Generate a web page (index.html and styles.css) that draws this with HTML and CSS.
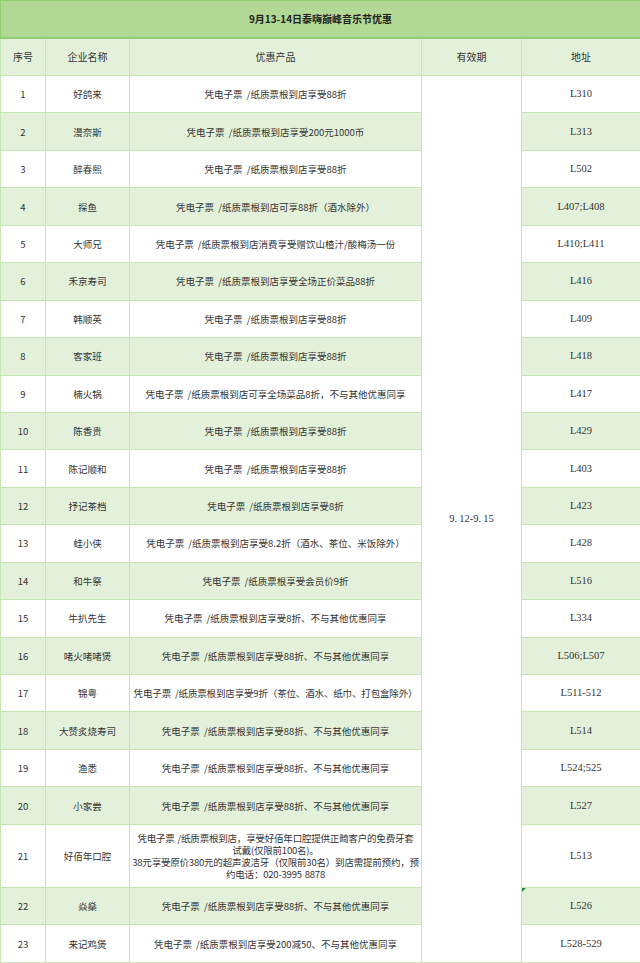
FILE: index.html
```html
<!DOCTYPE html>
<html lang="zh-CN">
<head>
<meta charset="utf-8">
<title>9月13-14日泰嗨巅峰音乐节优惠</title>
<link rel="stylesheet" href="styles.css">
</head>
<body>
<table class="deals">
  <colgroup>
    <col class="c-no">
    <col class="c-name">
    <col class="c-offer">
    <col class="c-valid">
    <col class="c-addr">
  </colgroup>
  <thead>
    <tr class="title-row"><th colspan="5" class="title">9月13-14日泰嗨巅峰音乐节优惠</th></tr>
    <tr class="head-row">
      <th>序号</th><th>企业名称</th><th>优惠产品</th><th>有效期</th><th>地址</th>
    </tr>
  </thead>
  <tbody>
    <tr class="row"><td>1</td><td>好鸽来</td><td class="offer">凭电子票 /纸质票根到店享受88折</td><td rowspan="23" class="valid">9.&#8201;12-9.&#8201;15</td><td class="addr">L310</td></tr>
    <tr class="row alt"><td>2</td><td>漫奈斯</td><td class="offer">凭电子票 /纸质票根到店享受200元1000币</td><td class="addr">L313</td></tr>
    <tr class="row"><td>3</td><td>醉春熙</td><td class="offer">凭电子票 /纸质票根到店享受88折</td><td class="addr">L502</td></tr>
    <tr class="row alt"><td>4</td><td>探鱼</td><td class="offer">凭电子票 /纸质票根到店可享88折（酒水除外）</td><td class="addr">L407;L408</td></tr>
    <tr class="row"><td>5</td><td>大师兄</td><td class="offer">凭电子票 /纸质票根到店消费享受赠饮山楂汁/酸梅汤一份</td><td class="addr">L410;L411</td></tr>
    <tr class="row alt"><td>6</td><td>禾京寿司</td><td class="offer">凭电子票 /纸质票根到店享受全场正价菜品88折</td><td class="addr">L416</td></tr>
    <tr class="row"><td>7</td><td>韩顺英</td><td class="offer">凭电子票 /纸质票根到店享受88折</td><td class="addr">L409</td></tr>
    <tr class="row alt"><td>8</td><td>客家班</td><td class="offer">凭电子票 /纸质票根到店享受88折</td><td class="addr">L418</td></tr>
    <tr class="row"><td>9</td><td>楠火锅</td><td class="offer">凭电子票 /纸质票根到店可享全场菜品8折，不与其他优惠同享</td><td class="addr">L417</td></tr>
    <tr class="row alt"><td>10</td><td>陈香贵</td><td class="offer">凭电子票 /纸质票根到店享受88折</td><td class="addr">L429</td></tr>
    <tr class="row"><td>11</td><td>陈记顺和</td><td class="offer">凭电子票 /纸质票根到店享受88折</td><td class="addr">L403</td></tr>
    <tr class="row alt"><td>12</td><td>抒记茶档</td><td class="offer">凭电子票 /纸质票根到店享受8折</td><td class="addr">L423</td></tr>
    <tr class="row"><td>13</td><td>蛙小侠</td><td class="offer">凭电子票 /纸质票根到店享受8.2折（酒水、茶位、米饭除外）</td><td class="addr">L428</td></tr>
    <tr class="row alt"><td>14</td><td>和牛祭</td><td class="offer">凭电子票 /纸质票根享受会员价9折</td><td class="addr">L516</td></tr>
    <tr class="row"><td>15</td><td>牛扒先生</td><td class="offer">凭电子票 /纸质票根到店享受8折、不与其他优惠同享</td><td class="addr">L334</td></tr>
    <tr class="row alt"><td>16</td><td>啫火啫啫煲</td><td class="offer">凭电子票 /纸质票根到店享受88折、不与其他优惠同享</td><td class="addr">L506;L507</td></tr>
    <tr class="row"><td>17</td><td>锦粤</td><td class="offer tight">凭电子票 /纸质票根到店享受9折（茶位、酒水、纸巾、打包盒除外）</td><td class="addr">L511-512</td></tr>
    <tr class="row alt"><td>18</td><td>大赞炙烧寿司</td><td class="offer">凭电子票 /纸质票根到店享受88折、不与其他优惠同享</td><td class="addr">L514</td></tr>
    <tr class="row"><td>19</td><td>渔悉</td><td class="offer">凭电子票 /纸质票根到店享受88折、不与其他优惠同享</td><td class="addr">L524;525</td></tr>
    <tr class="row alt"><td>20</td><td>小家尝</td><td class="offer">凭电子票 /纸质票根到店享受88折、不与其他优惠同享</td><td class="addr">L527</td></tr>
    <tr class="row tall"><td>21</td><td>好佰年口腔</td><td class="offer multi">凭电子票 /纸质票根到店，享受好佰年口腔提供正畸客户的免费牙套<br>试戴(仅限前100名)。<br>38元享受原价380元的超声波洁牙（仅限前30名）到店需提前预约，预<br>约电话：020-3995 8878</td><td class="addr">L513</td></tr>
    <tr class="row alt last2"><td>22</td><td>焱燊</td><td class="offer">凭电子票 /纸质票根到店享受88折、不与其他优惠同享</td><td class="addr flagged"><span class="flag"></span>L526</td></tr>
    <tr class="row last2"><td>23</td><td>来记鸡煲</td><td class="offer">凭电子票 /纸质票根到店享受200减50、不与其他优惠同享</td><td class="addr">L528-529</td></tr>
  </tbody>
</table>
</body>
</html>
```
FILE: styles.css
```css
html, body {
  margin: 0;
  padding: 0;
  background: #ffffff;
}

.deals {
  width: 640px;
  table-layout: fixed;
  border-collapse: collapse;
  border: 1px solid #90ce70;
  font-family: "Noto Sans CJK SC", "Noto Sans", sans-serif;
  font-size: 9.5px;
  color: #333333;
}

.c-no { width: 45px; }
.c-name { width: 84px; }
.c-offer { width: 292px; }
.c-valid { width: 100px; }
.c-addr { width: 119px; }

.deals th,
.deals td {
  border: 1px solid #c7e6b5;
  padding: 0 2px;
  text-align: center;
  vertical-align: middle;
  font-weight: normal;
  line-height: 12px;
}

.title-row { height: 37px; }

.deals .title {
  background: #b1d995;
  font-weight: bold;
  font-size: 10px;
  color: #222222;
  border: 1px solid #90ce70;
  border-bottom: 2px solid #8fcd70;
}

.head-row { height: 38px; }

.head-row th {
  background: #e3f1da;
  font-size: 10px;
}

.row { height: 37.45px; }
.row.tall { height: 63px; }
.row.last2 { height: 37.5px; }

.row.alt td {
  background: #e3f1da;
}

.deals .offer {
  padding: 0;
  white-space: nowrap;
  word-spacing: 2px;
}

.deals .tight {
  letter-spacing: -0.15px;
}

.deals .multi {
  line-height: 12px;
  letter-spacing: -0.2px;
  word-spacing: 1px;
}

.deals .valid,
.row.alt .valid {
  background: #ffffff;
  font-family: "Liberation Serif", "Noto Sans CJK SC", serif;
  font-size: 10.5px;
}

.addr {
  font-family: "Liberation Serif", "Noto Sans CJK SC", serif;
  font-size: 10.5px;
}

.flagged {
  position: relative;
}

.flag {
  position: absolute;
  left: 0;
  top: 0;
  width: 0;
  height: 0;
  border-top: 4px solid #2e8b3a;
  border-right: 4px solid transparent;
}
```
